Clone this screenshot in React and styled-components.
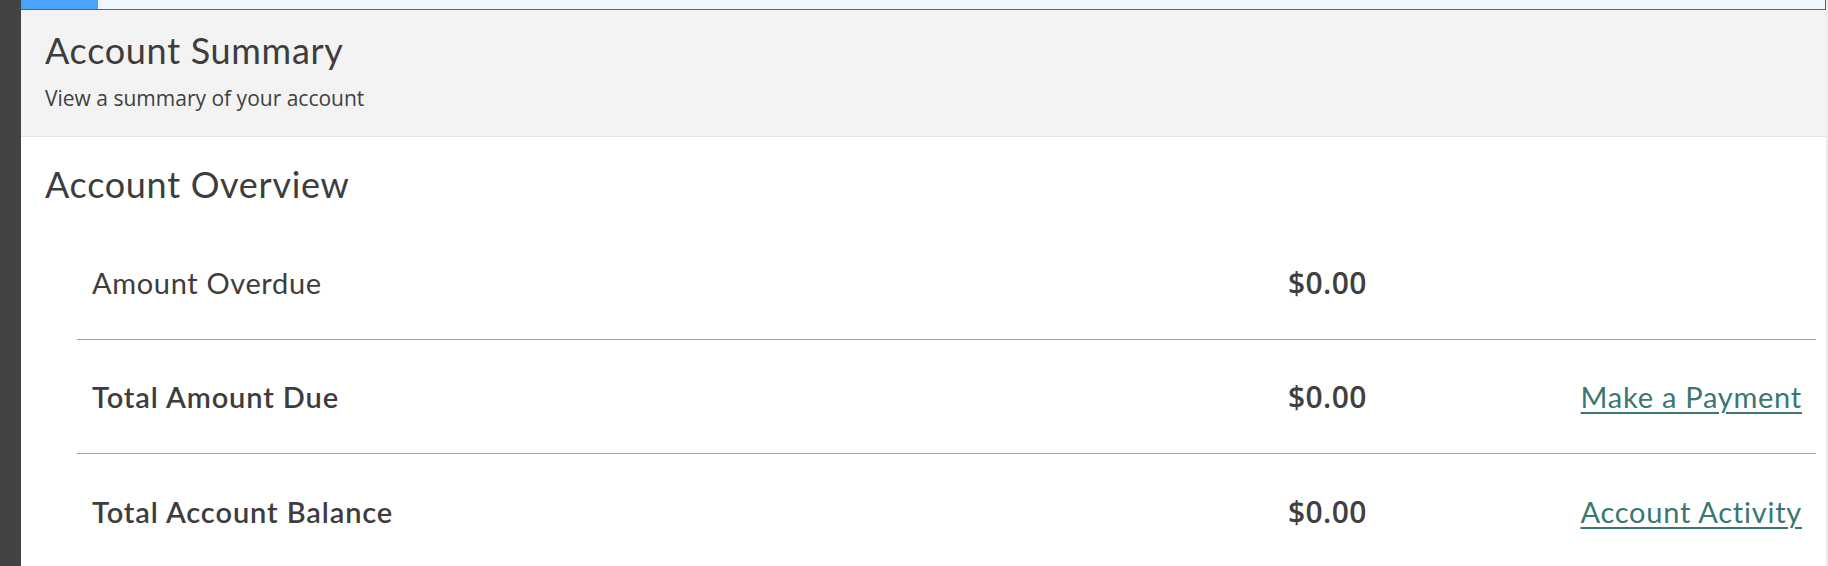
import * as React from 'react';
import styled, { createGlobalStyle } from 'styled-components';

const GlobalStyle = createGlobalStyle`
  html, body {
    margin: 0;
    padding: 0;
    background: #ececec;
  }
  * {
    box-sizing: border-box;
  }
`;

const Page = styled.div`
  display: flex;
  width: 1828px;
  height: 566px;
  overflow: hidden;
`;

const Sidebar = styled.div`
  width: 21px;
  flex-shrink: 0;
  background: #434343;
`;

const Main = styled.main`
  width: 1805px;
  flex-shrink: 0;
  background: #fff;
`;

const TabStrip = styled.div`
  display: flex;
  height: 10px;
  background: #eef6fe;
  border-bottom: 1px solid #2f6db0;
  border-right: 1px solid #2f6db0;
`;

const Tab = styled.div`
  width: 77px;
  background: #4aa3ff;
`;

const Header = styled.header`
  padding: 19px 0 24px 24px;
  background: #f3f3f3;
  border-bottom: 1px solid #e2e2e2;
`;

const Title = styled.h1`
  margin: 0;
  font-family: Lato, "Open Sans", sans-serif;
  font-weight: 400;
  font-size: 36px;
  letter-spacing: 0.7px;
  line-height: 43px;
  color: #3d3d3d;
`;

const Subtitle = styled.p`
  margin: 13px 0 0;
  font-family: "Open Sans", sans-serif;
  font-size: 21px;
  line-height: 27px;
  color: #404040;
`;

const Section = styled.section`
  padding: 26px 10px 0 24px;
`;

const SectionTitle = styled(Title).attrs({ as: 'h2' })`
  margin-bottom: 20px;
`;

const Rows = styled.div`
  margin-left: 32px;
`;

const Row = styled.div`
  display: grid;
  grid-template-columns: 1196px 1fr auto;
  align-items: center;
  height: 114px;
  padding: 0 14px 0 15px;
  border-bottom: 1px solid #a3a3a3;

  &:last-child {
    border-bottom: none;
  }
`;

const Label = styled.span`
  font-family: Lato, "Open Sans", sans-serif;
  font-size: 29px;
  letter-spacing: ${p => (p.$bold ? '0.9px' : '0.65px')};
  font-weight: ${p => (p.$bold ? 600 : 400)};
  color: #3d3d3d;
`;

const Amount = styled.span`
  font-family: "Open Sans", sans-serif;
  font-size: 30px;
  letter-spacing: 0.4px;
  font-weight: 600;
  color: #404040;
`;

const ActionLink = styled.a`
  font-family: Lato, "Open Sans", sans-serif;
  font-size: 29px;
  letter-spacing: 0.75px;
  color: #3b7770;
  text-decoration: underline;
  text-decoration-thickness: 2px;
  text-underline-offset: 4px;
  cursor: pointer;
`;

const rows = [
  { label: 'Amount Overdue', amount: '$0.00' },
  { label: 'Total Amount Due', amount: '$0.00', bold: true, link: 'Make a Payment' },
  { label: 'Total Account Balance', amount: '$0.00', bold: true, link: 'Account Activity' },
];

function App() {
  return (
    <>
      <GlobalStyle />
      <Page>
        <Sidebar />
        <Main>
          <TabStrip>
            <Tab />
          </TabStrip>
          <Header>
            <Title>Account Summary</Title>
            <Subtitle>View a summary of your account</Subtitle>
          </Header>
          <Section>
            <SectionTitle>Account Overview</SectionTitle>
            <Rows>
              {rows.map(row => (
                <Row key={row.label}>
                  <Label $bold={row.bold}>{row.label}</Label>
                  <Amount>{row.amount}</Amount>
                  {row.link ? <ActionLink href="#">{row.link}</ActionLink> : <span />}
                </Row>
              ))}
            </Rows>
          </Section>
        </Main>
      </Page>
    </>
  );
}

export default App;
